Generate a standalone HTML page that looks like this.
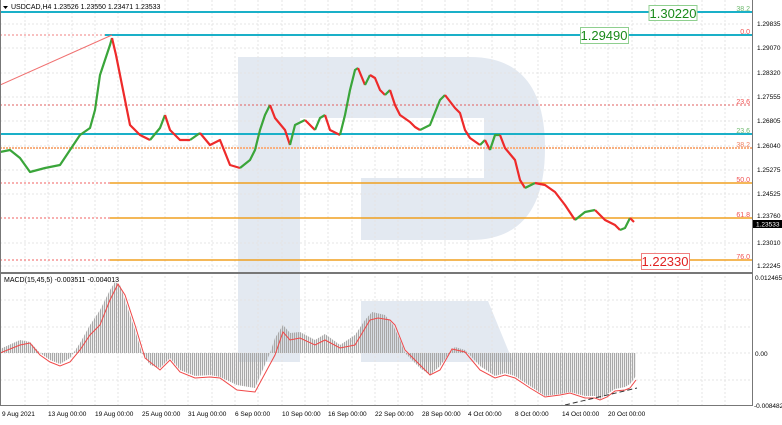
<!DOCTYPE html>
<html><head><meta charset="utf-8"><style>
html,body{margin:0;padding:0;background:#fff;}
body{width:782px;height:420px;overflow:hidden;font-family:"Liberation Sans",sans-serif;}
svg text{font-family:"Liberation Sans",sans-serif;}
</style></head><body>
<svg width="782" height="420" viewBox="0 0 782 420" xmlns="http://www.w3.org/2000/svg">
<defs>
<pattern id="hist" width="2" height="10" patternUnits="userSpaceOnUse"><rect x="0" y="0" width="1.2" height="10" fill="#a8a8a8"/></pattern>
</defs>
<rect width="782" height="420" fill="#fff"/>
<!-- watermark -->
<g fill="#e3e9f1">
<rect x="238" y="57" width="62" height="305"/>
<path d="M300 57 H470 Q545 57 545 148 Q545 240 470 240 H361 V178 H484 V118 H300 Z"/>
<path d="M361 301 H488 L513 362 H361 Z"/>
</g>
<!-- grid -->
<g stroke="#e4e4e4" stroke-dasharray="2,2" stroke-width="1">
<path d="M25 0V405M48 0V405M72 0V405M95 0V405M118 0V405M142 0V405M165 0V405M188 0V405M212 0V405M235 0V405M258 0V405M282 0V405M305 0V405M328 0V405M352 0V405M375 0V405M398 0V405M422 0V405M445 0V405M468 0V405M492 0V405M515 0V405M538 0V405M562 0V405M585 0V405M608 0V405M632 0V405M655 0V405M678 0V405M702 0V405M725 0V405"/>
<path d="M0 24H752M0 48H752M0 73H752M0 97H752M0 121H752M0 146H752M0 170H752M0 194H752M0 218H752M0 243H752M0 266H752M0 300H752M0 327H752M0 353H752M0 380H752"/>
</g>
<!-- fib lines -->
<line x1="0" y1="12" x2="752" y2="12" stroke="#1ab0c8" stroke-width="2"/>
<line x1="0" y1="35" x2="752" y2="35" stroke="#f08080" stroke-dasharray="2,2"/>
<line x1="105" y1="35" x2="752" y2="35" stroke="#1ab0c8" stroke-width="2"/>
<line x1="0" y1="105" x2="752" y2="105" stroke="#e06060" stroke-dasharray="2,2"/>
<line x1="0" y1="134" x2="752" y2="134" stroke="#1ab0c8" stroke-width="2"/>
<line x1="0" y1="148" x2="752" y2="148" stroke="#f8b080" stroke-dasharray="2,1" stroke-width="2"/>
<line x1="0" y1="183" x2="110" y2="183" stroke="#f06060" stroke-dasharray="2,2"/>
<line x1="110" y1="183" x2="752" y2="183" stroke="#f0a020" stroke-width="1.5"/>
<line x1="0" y1="218" x2="110" y2="218" stroke="#f06060" stroke-dasharray="2,2"/>
<line x1="110" y1="218" x2="752" y2="218" stroke="#f0a020" stroke-width="1.5"/>
<line x1="0" y1="260" x2="110" y2="260" stroke="#f06060" stroke-dasharray="2,2"/>
<line x1="110" y1="260" x2="752" y2="260" stroke="#f0a020" stroke-width="1.5"/>
<line x1="0" y1="85" x2="112" y2="35" stroke="#f07070" stroke-width="1"/>
<!-- price -->
<g fill="none" stroke-width="2.2" stroke-linejoin="round">
<polyline stroke="#3aa53a" points="0,152 10,150 20,158 30,172 45,168 60,165 70,150 80,135 90,128 95,110 100,75 105,60 110,45 112,38"/>
<polyline stroke="#ee2a2a" points="112,38 116,55 120,75 125,100 130,125 140,135 150,140"/>
<polyline stroke="#3aa53a" points="150,140 160,128 165,115"/>
<polyline stroke="#ee2a2a" points="165,115 170,130 180,140 190,140"/>
<polyline stroke="#3aa53a" points="190,140 200,133"/>
<polyline stroke="#ee2a2a" points="200,133 210,145 220,140 230,165 240,168"/>
<polyline stroke="#3aa53a" points="240,168 250,160 255,150 260,130 265,115 270,105"/>
<polyline stroke="#ee2a2a" points="270,105 275,118 285,130 290,145"/>
<polyline stroke="#3aa53a" points="290,145 295,125 305,120"/>
<polyline stroke="#ee2a2a" points="305,120 315,130"/>
<polyline stroke="#3aa53a" points="315,130 320,118 325,115"/>
<polyline stroke="#ee2a2a" points="325,115 330,130 340,135"/>
<polyline stroke="#3aa53a" points="340,135 345,115 350,90 355,70 358,68"/>
<polyline stroke="#ee2a2a" points="358,68 365,85"/>
<polyline stroke="#3aa53a" points="365,85 370,75"/>
<polyline stroke="#ee2a2a" points="370,75 375,78 380,90 385,95"/>
<polyline stroke="#3aa53a" points="385,95 390,90"/>
<polyline stroke="#ee2a2a" points="390,90 395,105 400,115 410,122 415,127 420,130"/>
<polyline stroke="#3aa53a" points="420,130 430,125 440,100 445,95"/>
<polyline stroke="#ee2a2a" points="445,95 455,108 460,113 465,130 470,138 480,145"/>
<polyline stroke="#3aa53a" points="480,145 485,140"/>
<polyline stroke="#ee2a2a" points="485,140 490,150"/>
<polyline stroke="#3aa53a" points="490,150 495,135 500,135"/>
<polyline stroke="#ee2a2a" points="500,135 505,148 515,160 520,180 525,188"/>
<polyline stroke="#3aa53a" points="525,188 535,183"/>
<polyline stroke="#ee2a2a" points="535,183 545,185 555,192 565,205 575,220"/>
<polyline stroke="#3aa53a" points="575,220 585,212 595,210"/>
<polyline stroke="#ee2a2a" points="595,210 605,220 615,225 620,230"/>
<polyline stroke="#3aa53a" points="620,230 625,228 630,218"/>
<polyline stroke="#ee2a2a" points="630,218 634,222"/>
</g>
<!-- fib labels -->
<g font-size="7" text-anchor="end">
<text x="750" y="11" fill="#6cb86c">38.2</text>
<text x="750" y="34" fill="#f05050">0.0</text>
<text x="750" y="104" fill="#f05050">23.6</text>
<text x="750" y="133" fill="#6cb86c">23.6</text>
<text x="750" y="147" fill="#f08060">38.2</text>
<text x="750" y="182" fill="#f05050">50.0</text>
<text x="750" y="217" fill="#f05050">61.8</text>
<text x="750" y="259" fill="#f05050">76.0</text>
</g>
<rect x="649" y="5.5" width="48" height="15" fill="#fff" stroke="#8fcf8f"/>
<text x="673" y="18" font-size="13" fill="#1a8a1a" text-anchor="middle">1.30220</text>
<rect x="580.5" y="27.5" width="48" height="16" fill="#fff" stroke="#8fcf8f"/>
<text x="604" y="40" font-size="13" fill="#1a8a1a" text-anchor="middle">1.29490</text>
<rect x="641.5" y="253.5" width="48" height="16" fill="#fff" stroke="#f08080"/>
<text x="665" y="266" font-size="13" fill="#e02020" text-anchor="middle">1.22330</text>
<!-- title -->
<path d="M3 6 L8 6 L5.5 9 Z" fill="#000"/>
<text x="11" y="9" font-size="7" fill="#000">USDCAD,H4  1.23526 1.23550 1.23471 1.23533</text>
<!-- separator -->
<rect x="0" y="272" width="752" height="2" fill="#777"/>
<!-- MACD -->
<polygon fill="url(#hist)" points="0,353 0,349 20,340 30,342 40,353 50,360 60,364 70,358 80,343 90,325 100,310 110,290 115,282 120,285 125,300 135,330 142,353 150,365 160,368 170,358 180,370 195,376 210,375 220,377 237,385 255,388 270,353 275,338 283,325 290,333 300,332 315,340 325,334 340,345 355,335 365,320 372,312 385,315 393,325 400,340 405,353 420,368 430,375 440,366 450,352 455,347 465,350 480,366 495,376 505,373 515,376 530,386 545,396 560,394 570,392 585,396 595,396 600,399 607,394 615,389 625,387 630,384 636,376 636,353"/>
<polyline fill="none" stroke="#f04848" stroke-width="1" points="0,353 20,345 30,343 40,355 50,362 60,366 70,362 80,350 90,335 100,325 110,300 118,284 125,295 135,325 145,358 160,370 170,360 180,372 195,378 210,377 220,378 237,390 255,392 275,355 283,332 290,340 300,338 315,345 325,340 340,348 355,345 370,320 378,318 390,320 395,325 405,350 420,365 430,375 440,370 452,349 465,352 480,370 495,378 505,375 515,378 530,388 545,397 560,395 570,393 585,398 595,398 600,400 607,397 615,391 625,390 630,388 636,380"/>
<line x1="565" y1="405" x2="637" y2="388" stroke="#333" stroke-dasharray="5,3"/>
<text x="4" y="282" font-size="7" fill="#000">MACD(15,45,5) -0.003511 -0.004013</text>
<!-- axes -->
<line x1="752.5" y1="0" x2="752.5" y2="405" stroke="#777"/>
<line x1="0" y1="405.5" x2="753" y2="405.5" stroke="#777"/>
<line x1="0.5" y1="0" x2="0.5" y2="405" stroke="#777"/>
<g font-size="6.5" fill="#000">
<text x="757" y="26">1.29835</text>
<text x="757" y="50">1.29070</text>
<text x="757" y="75">1.28320</text>
<text x="757" y="99">1.27555</text>
<text x="757" y="123">1.26805</text>
<text x="757" y="148">1.26040</text>
<text x="757" y="172">1.25275</text>
<text x="757" y="196">1.24525</text>
<text x="757" y="218">1.23760</text>
<text x="757" y="245">1.23010</text>
<text x="757" y="268">1.22245</text>
<text x="755" y="280">0.012465</text>
<text x="755" y="356">0.00</text>
<text x="754" y="408">-0.008482</text>
</g>
<rect x="753" y="220" width="29" height="8" fill="#000"/>
<text x="756" y="226.5" font-size="6.5" fill="#fff">1.23533</text>
<g font-size="6.5" fill="#000">
<text x="2" y="416">9 Aug 2021</text>
<text x="48" y="416">13 Aug 00:00</text>
<text x="95" y="416">19 Aug 00:00</text>
<text x="142" y="416">25 Aug 00:00</text>
<text x="188" y="416">31 Aug 00:00</text>
<text x="235" y="416">6 Sep 00:00</text>
<text x="282" y="416">10 Sep 00:00</text>
<text x="328" y="416">16 Sep 00:00</text>
<text x="375" y="416">22 Sep 00:00</text>
<text x="422" y="416">28 Sep 00:00</text>
<text x="468" y="416">4 Oct 00:00</text>
<text x="515" y="416">8 Oct 00:00</text>
<text x="562" y="416">14 Oct 00:00</text>
<text x="608" y="416">20 Oct 00:00</text>
</g>
</svg>
</body></html>
